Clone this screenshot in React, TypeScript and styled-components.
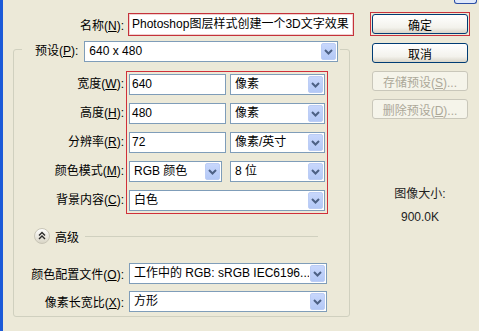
import React from 'react';
import styled, { createGlobalStyle } from 'styled-components';

const GlobalStyle = createGlobalStyle`
  html, body {
    margin: 0;
    padding: 0;
    background: #ece9d8;
  }
  body {
    font-family: 'Liberation Sans', 'Noto Sans CJK SC', sans-serif;
    font-size: 12px;
    color: #000;
  }
`;

const Chevron = () => (
  <svg width="9" height="6" viewBox="0 0 9 6">
    <polyline points="1,1 4.5,4.5 8,1" fill="none" stroke="#4d6185" strokeWidth="2" />
  </svg>
);

const CollapseIcon = () => (
  <svg width="16" height="16" viewBox="0 0 16 16">
    <defs>
      <linearGradient id="cg" x1="0" y1="0" x2="0" y2="1">
        <stop offset="0" stopColor="#ffffff" />
        <stop offset="1" stopColor="#d8d4c4" />
      </linearGradient>
    </defs>
    <circle cx="8" cy="8" r="7.5" fill="url(#cg)" stroke="#c8c5b6" />
    <polyline points="5,7.5 8,4.5 11,7.5" fill="none" stroke="#2b2b2b" strokeWidth="1.4" />
    <polyline points="5,11 8,8 11,11" fill="none" stroke="#2b2b2b" strokeWidth="1.4" />
  </svg>
);

const ComboBox = ({ text, width }: { text?: string; width: number }) => (
  <Combo $w={width}>
    <ComboText>{text}</ComboText>
    <ArrowButton>
      <Chevron />
    </ArrowButton>
  </Combo>
);

export default function App() {
  return (
    <>
      <GlobalStyle />
      <Window>
        <TitleStrip>
          <CloseStub />
        </TitleStrip>
        <Body>
          <LeftColumn>
            <NameRow>
              <NameLabel>
                名称(<u>N</u>):
              </NameLabel>
              <NameInput>Photoshop图层样式创建一个3D文字效果</NameInput>
            </NameRow>

            <Group>
              <Legend>
                <LegendInner>
                  <PresetLabel>
                    预设(<u>P</u>):
                  </PresetLabel>
                  <PresetCombo>
                    <ComboText>640 x 480</ComboText>
                    <ArrowButton>
                      <Chevron />
                    </ArrowButton>
                  </PresetCombo>
                </LegendInner>
              </Legend>

              <FieldArea>
                <LabelStack>
                  <FieldLabel>
                    宽度(<u>W</u>):
                  </FieldLabel>
                  <FieldLabel>
                    高度(<u>H</u>):
                  </FieldLabel>
                  <FieldLabel>
                    分辨率(<u>R</u>):
                  </FieldLabel>
                  <FieldLabel>
                    颜色模式(<u>M</u>):
                  </FieldLabel>
                  <FieldLabel>
                    背景内容(<u>C</u>):
                  </FieldLabel>
                </LabelStack>
                <MarkBox>
                  <FieldRow>
                    <TextInput>640</TextInput>
                    <ComboBox text="像素" width={95} />
                  </FieldRow>
                  <FieldRow>
                    <TextInput>480</TextInput>
                    <ComboBox text="像素" width={95} />
                  </FieldRow>
                  <FieldRow>
                    <TextInput>72</TextInput>
                    <ComboBox text="像素/英寸" width={95} />
                  </FieldRow>
                  <FieldRow $gap={8}>
                    <ComboBox text="RGB 颜色" width={93} />
                    <ComboBox text="8 位" width={95} />
                  </FieldRow>
                  <FieldRow>
                    <ComboBox text="白色" width={196} />
                  </FieldRow>
                </MarkBox>
              </FieldArea>

              <AdvancedRow>
                <CollapseIcon />
                <AdvancedText>高级</AdvancedText>
                <Rule />
              </AdvancedRow>

              <ProfileRows>
                <ProfileRow>
                  <ProfileLabel>
                    颜色配置文件(<u>O</u>):
                  </ProfileLabel>
                  <ComboBox text="工作中的 RGB: sRGB IEC6196..." width={198} />
                </ProfileRow>
                <ProfileRow>
                  <ProfileLabel>
                    像素长宽比(<u>X</u>):
                  </ProfileLabel>
                  <ComboBox text="方形" width={198} />
                </ProfileRow>
              </ProfileRows>
            </Group>
          </LeftColumn>

          <RightColumn>
            <DefaultFrame>
              <Button>确定</Button>
            </DefaultFrame>
            <Button>取消</Button>
            <Button disabled>
              存储预设(<u>S</u>)...
            </Button>
            <Button disabled>
              删除预设(<u>D</u>)...
            </Button>
            <SizeInfo>
              <span>图像大小:</span>
              <span>900.0K</span>
            </SizeInfo>
          </RightColumn>
        </Body>
      </Window>
    </>
  );
}

const Window = styled.div`
  width: 479px;
  height: 331px;
  box-sizing: border-box;
  border-left: 3px solid #1c5ad8;
  background: #ece9d8;
  overflow: hidden;
  display: flex;
  flex-direction: column;
`;

const TitleStrip = styled.div`
  height: 4px;
  display: flex;
  justify-content: flex-end;
  padding-right: 2px;
`;

const CloseStub = styled.div`
  width: 21px;
  height: 3px;
  border: 1px solid #2a4ea6;
  border-top: none;
  border-radius: 0 0 3px 3px;
  background: #dfe8fb;
`;

const Body = styled.div`
  display: flex;
  padding-top: 9px;
`;

const LeftColumn = styled.div`
  width: 351px;
  display: flex;
  flex-direction: column;
`;

const NameRow = styled.div`
  display: flex;
  align-items: center;
  gap: 4px;
`;

const NameLabel = styled.div`
  width: 121px;
  text-align: right;
`;

const NameInput = styled.div`
  width: 226px;
  height: 23px;
  box-sizing: border-box;
  border: 1px solid #c5323a;
  box-shadow: inset 0 0 0 1px #f0d0d0;
  background: #fff;
  padding-left: 3px;
  line-height: 21px;
  white-space: nowrap;
  overflow: hidden;
`;

const Group = styled.fieldset`
  margin: 5px 0 0 10px;
  width: 337px;
  box-sizing: border-box;
  border: 1px solid #d0d0bf;
  border-radius: 3px;
  padding: 14px 0 4px 0;
  min-width: 0;
`;

const Legend = styled.legend`
  margin-left: 8px;
  padding: 0 2px 0 13px;
`;

const LegendInner = styled.div`
  display: flex;
  align-items: flex-start;
  height: 16px;
`;

const PresetLabel = styled.div`
  height: 21px;
  line-height: 21px;
  margin-bottom: -5px;
  margin-right: 6px;
  white-space: nowrap;
`;

const Combo = styled.div<{ $w: number }>`
  width: ${(p) => p.$w}px;
  height: 21px;
  box-sizing: border-box;
  border: 1px solid #7f9db9;
  background: #fff;
  display: flex;
  align-items: stretch;
  flex-shrink: 0;
`;

const PresetCombo = styled(Combo).attrs({ $w: 254 })`
  margin-bottom: -5px;
`;

const ComboText = styled.div`
  flex: 1;
  padding-left: 4px;
  line-height: 19px;
  white-space: nowrap;
  overflow: hidden;
`;

const ArrowButton = styled.div`
  width: 15px;
  margin: 1px;
  box-sizing: border-box;
  border: 1px solid #bccdf5;
  border-radius: 2px;
  background: linear-gradient(#c8d7fc, #b3c8f6);
  display: flex;
  align-items: center;
  justify-content: center;
`;

const FieldArea = styled.div`
  display: flex;
`;

const LabelStack = styled.div`
  width: 112px;
  padding-top: 3px;
  display: flex;
  flex-direction: column;
  gap: 8px;
`;

const FieldLabel = styled.div`
  height: 21px;
  line-height: 21px;
  text-align: right;
  padding-right: 2px;
  white-space: nowrap;
`;

const MarkBox = styled.div`
  border: 1px solid #d0303a;
  padding: 2px;
  display: flex;
  flex-direction: column;
  gap: 8px;
`;

const FieldRow = styled.div<{ $gap?: number }>`
  display: flex;
  gap: ${(p) => p.$gap ?? 4}px;
`;

const TextInput = styled.div`
  width: 97px;
  height: 21px;
  box-sizing: border-box;
  border: 1px solid #7f9db9;
  background: #fff;
  padding-left: 2px;
  line-height: 19px;
`;

const AdvancedRow = styled.div`
  margin-top: 14px;
  height: 16px;
  display: flex;
  align-items: center;
  padding-left: 20px;
  padding-right: 31px;
`;

const AdvancedText = styled.span`
  margin-left: 5px;
`;

const Rule = styled.div`
  flex: 1;
  height: 1px;
  background: #d0d0bf;
  margin-left: 6px;
`;

const ProfileRows = styled.div`
  margin-top: 19px;
  display: flex;
  flex-direction: column;
  gap: 7px;
`;

const ProfileRow = styled.div`
  display: flex;
  align-items: center;
`;

const ProfileLabel = styled.div`
  width: 115px;
  box-sizing: border-box;
  padding-right: 5px;
  text-align: right;
  white-space: nowrap;
`;

const RightColumn = styled.div`
  margin-left: 16px;
  width: 100px;
  display: flex;
  flex-direction: column;
  align-items: center;
  gap: 8px;
`;

const DefaultFrame = styled.div`
  border: 1px solid #c8323c;
  padding: 1px;
  margin-top: -1px;
  margin-bottom: -1px;
`;

const Button = styled.button`
  width: 96px;
  height: 20px;
  box-sizing: border-box;
  padding: 0;
  font: inherit;
  color: #000;
  border: 1px solid #003c74;
  border-radius: 3px;
  background: linear-gradient(#ffffff, #f3f2ec 70%, #d9d5c9);
  &:disabled {
    color: #aca899;
    border-color: #c9c7ba;
    background: #f5f4ea;
  }
`;

const SizeInfo = styled.div`
  margin-top: 59px;
  display: flex;
  flex-direction: column;
  align-items: center;
  gap: 7px;
  line-height: 16px;
  color: #222;
`;
